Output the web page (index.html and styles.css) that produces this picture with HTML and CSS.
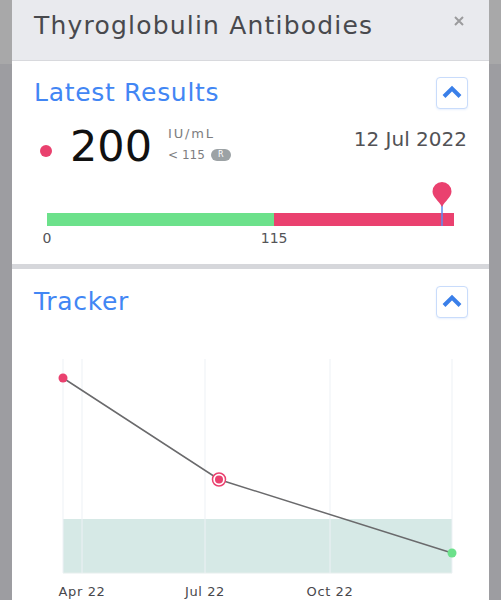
FILE: index.html
```html
<!DOCTYPE html>
<html lang="en">
<head>
  <meta charset="UTF-8">
  <meta name="viewport" content="width=device-width,initial-scale=1.0">
  <title>Thyroglobulin Antibodies</title>
  <link rel="stylesheet" href="styles.css">
</head>
<body>
  <div class="modal">
    <div class="modal-header">
      <h1>Thyroglobulin Antibodies</h1>
      <svg class="close" width="10" height="10" viewBox="0 0 10 10">
        <path d="M1 1 L9 9 M9 1 L1 9" />
      </svg>
    </div>

    <section class="panel results">
      <div class="panel-head">
        <h2>Latest Results</h2>
        <button class="toggle" type="button">
          <svg width="30" height="30" viewBox="0 0 30 30"><path d="M7 18.5 L15 10.5 L23 18.5" /></svg>
        </button>
      </div>
      <div class="result-row">
        <span class="dot"></span>
        <span class="value">200</span>
        <div class="units">
          <div class="unit">IU/mL</div>
          <div class="ref">&lt; 115 <span class="badge">R</span></div>
        </div>
        <div class="date">12 Jul 2022</div>
      </div>
      <div class="range">
        <div class="bar">
          <div class="bar-ok" style="width:55.8%"></div>
          <div class="bar-high"></div>
        </div>
        <div class="pin" style="left:97%">
          <svg width="20" height="45" viewBox="0 0 20 45">
            <line x1="10" y1="22" x2="10" y2="44" />
            <path d="M10 25 C7 19 0.5 15 0.5 9.5 A9.5 9.5 0 0 1 19.5 9.5 C19.5 15 13 19 10 25 Z" />
          </svg>
        </div>
        <div class="range-labels">
          <span style="left:0%">0</span>
          <span style="left:55.8%">115</span>
        </div>
      </div>
    </section>

    <section class="panel tracker">
      <div class="panel-head">
        <h2>Tracker</h2>
        <button class="toggle" type="button">
          <svg width="30" height="30" viewBox="0 0 30 30"><path d="M7 18.5 L15 10.5 L23 18.5" /></svg>
        </button>
      </div>
      <svg class="chart" width="477" height="260" viewBox="0 0 477 260">
        <rect class="band" x="51" y="179" width="389" height="54" />
        <line class="band-edge" x1="51" y1="233" x2="440" y2="233" />
        <g class="grid">
          <line x1="51" y1="19" x2="51" y2="233" />
          <line x1="70" y1="19" x2="70" y2="233" />
          <line x1="193" y1="19" x2="193" y2="233" />
          <line x1="318" y1="19" x2="318" y2="233" />
          <line x1="440" y1="19" x2="440" y2="233" />
        </g>
        <polyline class="trend" points="51,38 207,139.5 440,213" />
        <circle class="pt-high" cx="51" cy="38" r="4.5" />
        <circle class="pt-ring" cx="207" cy="139.5" r="6.5" />
        <circle class="pt-high" cx="207" cy="139.5" r="4" />
        <circle class="pt-ok" cx="440" cy="213" r="4.5" />
        <g class="axis">
          <text x="70" y="256">Apr 22</text>
          <text x="193" y="256">Jul 22</text>
          <text x="318" y="256">Oct 22</text>
        </g>
      </svg>
    </section>
  </div>
</body>
</html>
```

FILE: styles.css
```css
body {
  margin: 0;
  padding: 0 12px;
  height: 600px;
  overflow: hidden;
  font-family: "DejaVu Sans", sans-serif;
  background: linear-gradient(#a8a8a9 0, #a8a8a9 64px, #9d9da1 64px);
}
.modal {
  background: #fff;
  height: 600px;
}
.modal-header {
  box-sizing: border-box;
  height: 61px;
  background: #e9eaee;
  border-bottom: 1px solid #d8d9dd;
  display: flex;
  justify-content: space-between;
  align-items: flex-start;
  padding: 11px 25px 0 22px;
}
.modal-header h1 {
  margin: 0;
  font-size: 25px;
  line-height: 30px;
  font-weight: 400;
  letter-spacing: 1.2px;
  color: #48494d;
}
.close {
  margin-top: 5px;
  stroke: #9b9b9d;
  stroke-width: 2;
  fill: none;
}
.panel {
  background: #fff;
}
.panel-head {
  display: flex;
  justify-content: space-between;
  align-items: center;
  height: 32px;
  padding: 0 21px 0 22px;
}
.panel-head h2 {
  margin: 0;
  font-size: 25px;
  line-height: 32px;
  font-weight: 400;
  letter-spacing: 0.7px;
  color: #4286f4;
}
.toggle {
  box-sizing: border-box;
  width: 32px;
  height: 32px;
  padding: 0;
  border: 1.5px solid #c9dcfb;
  border-radius: 4px;
  background: #fff;
  box-shadow: 0 1px 2px #4286f41f;
  display: flex;
  align-items: center;
  justify-content: center;
}
.toggle path {
  fill: none;
  stroke: #3a7fe9;
  stroke-width: 4;
  stroke-linejoin: miter;
}

/* latest results */
.results {
  padding: 16px 0 20px;
  border-bottom: 5px solid #d6d7db;
  box-shadow: 0 1px 0 #eeeef0;
}
.result-row {
  display: flex;
  align-items: flex-start;
  margin-top: 16px;
  padding: 0 22px 0 28px;
  height: 43px;
}
.dot {
  width: 12px;
  height: 12px;
  border-radius: 50%;
  background: #e9416e;
  margin-top: 20px;
}
.value {
  margin-left: 18px;
  font-size: 43px;
  line-height: 1;
  color: #111;
}
.units {
  margin-left: 16px;
  color: #7d7d80;
}
.unit {
  margin-top: 1.5px;
  font-size: 13px;
  line-height: 13px;
  letter-spacing: 1.8px;
}
.ref {
  margin-top: 8px;
  display: flex;
  align-items: center;
  gap: 6px;
  font-size: 12px;
  line-height: 14px;
}
.badge {
  display: inline-block;
  width: 20px;
  height: 12px;
  border-radius: 6px;
  background: #9ca2a5;
  color: #fff;
  font-size: 8px;
  line-height: 12px;
  text-align: center;
}
.date {
  margin-left: auto;
  margin-top: 4px;
  font-size: 20px;
  line-height: 1;
  color: #525256;
}
.range {
  position: relative;
  margin: 14px 35px 0;
  padding-top: 31px;
}
.bar {
  display: flex;
  height: 13px;
}
.bar-ok {
  background: #6ce18b;
}
.bar-high {
  flex: 1;
  background: #ea416f;
}
.pin {
  position: absolute;
  top: 0;
  margin-left: -10px;
  line-height: 0;
}
.pin path {
  fill: #ea416f;
}
.pin line {
  stroke: #5b8ef0;
  stroke-width: 1.5;
}
.range-labels {
  position: relative;
  height: 18px;
  font-size: 14px;
  color: #545458;
}
.range-labels span {
  position: absolute;
  top: 5px;
  line-height: 1;
  transform: translateX(-50%);
}

/* tracker chart */
.tracker {
  padding-top: 17px;
}
.chart {
  display: block;
  margin-top: 22px;
}
.band {
  fill: #d6e9e6;
}
.band-edge {
  stroke: #e6eeed;
  stroke-width: 1;
}
.grid line {
  stroke: #edf1f5;
  stroke-width: 1;
}
.trend {
  fill: none;
  stroke: #6a6a6c;
  stroke-width: 1.5;
}
.pt-high {
  fill: #ea416f;
}
.pt-ring {
  fill: #fff;
  stroke: #ea416f;
  stroke-width: 1.5;
}
.pt-ok {
  fill: #6ce18b;
}
.axis text {
  font-family: "DejaVu Sans", sans-serif;
  font-size: 13px;
  letter-spacing: 0.6px;
  fill: #48484c;
  text-anchor: middle;
}
```
